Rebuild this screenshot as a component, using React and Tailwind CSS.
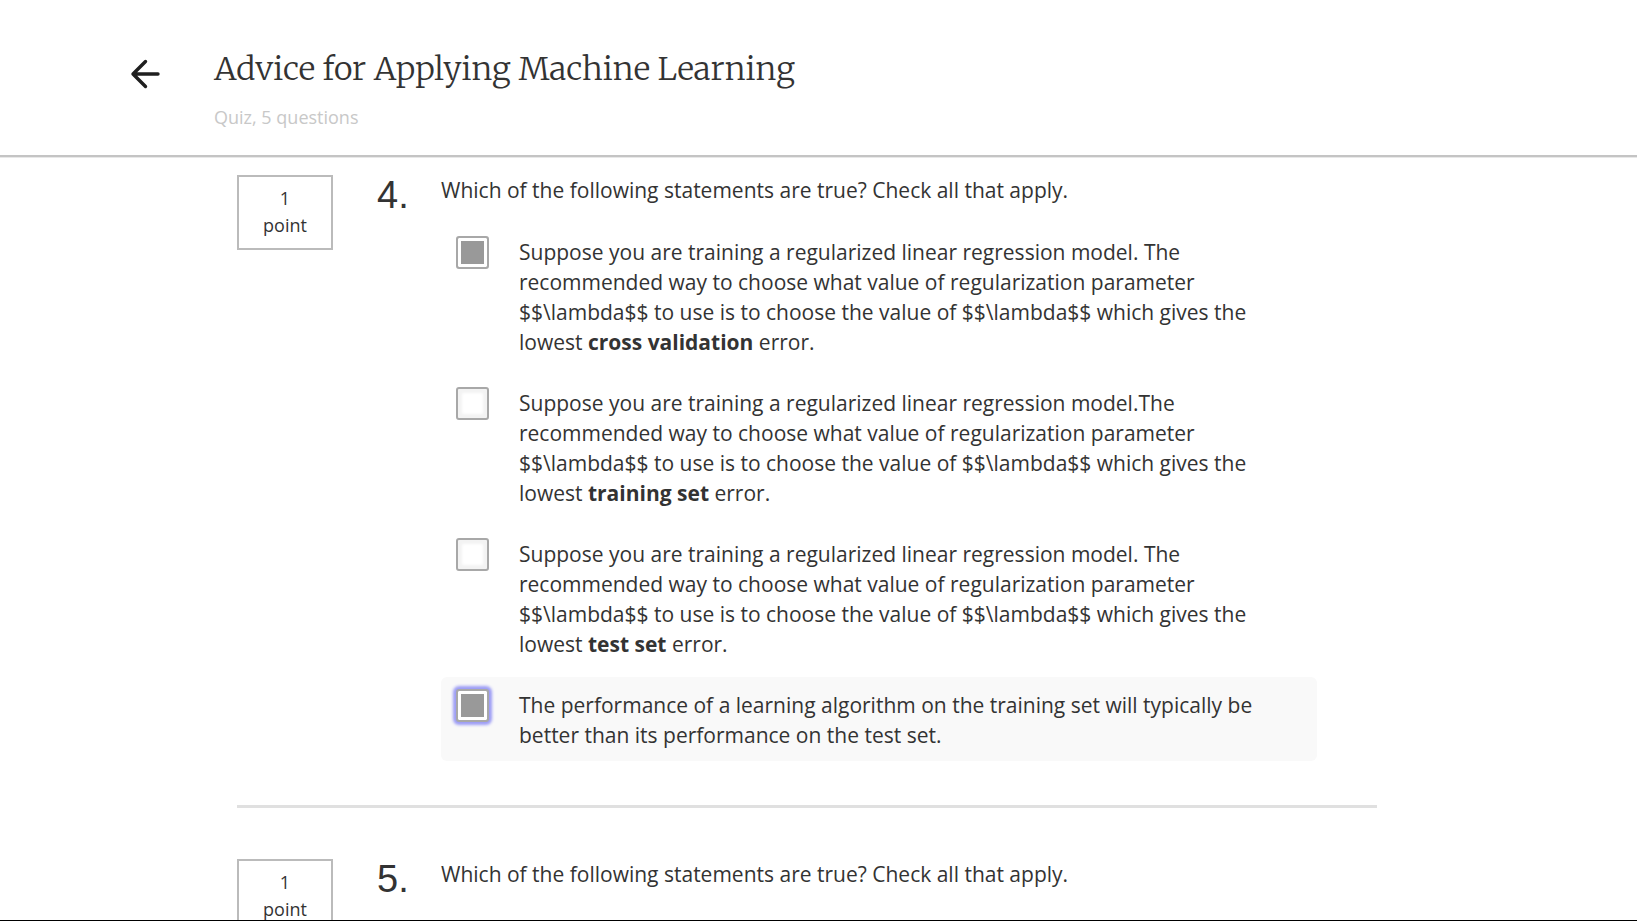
const lambdaOption = (lead, kind) => (
  <>
    {lead} recommended way to choose what value of regularization parameter
    $$\lambda$$ to use is to choose the value of $$\lambda$$ which gives the lowest{' '}
    <strong className="font-bold">{kind}</strong> error.
  </>
);

const questions = [
  {
    number: 4,
    options: [
      { id: 'q4-a', checked: true, text: lambdaOption('Suppose you are training a regularized linear regression model. The', 'cross validation') },
      { id: 'q4-b', checked: false, text: lambdaOption('Suppose you are training a regularized linear regression model.The', 'training set') },
      { id: 'q4-c', checked: false, text: lambdaOption('Suppose you are training a regularized linear regression model. The', 'test set') },
      {
        id: 'q4-d',
        checked: true,
        active: true,
        text: 'The performance of a learning algorithm on the training set will typically be better than its performance on the test set.',
      },
    ],
  },
  { number: 5, options: [{ id: 'q5-a', checked: false, text: '' }] },
];

function Option({ option }) {
  return (
    <div className={`flex gap-[30px] rounded-md pt-3 pr-12 pb-[11px] pl-[15px] ${option.active ? 'bg-[#f9f9f9]' : ''}`}>
      <input
        id={option.id}
        type="checkbox"
        defaultChecked={option.checked}
        aria-labelledby={`${option.id}-text`}
        className={`size-[33px] shrink-0 appearance-none rounded-[3px] border-2 border-[#a8a8a8] bg-white checked:bg-[#999999] ${
          option.active
            ? 'shadow-[inset_0_0_0_3px_#ffffff,0_0_3px_3px_#9c9cf5]'
            : 'shadow-[inset_0_0_3px_4px_#f3f3f3] checked:shadow-[inset_0_0_0_3px_#ffffff]'
        }`}
      />
      <label id={`${option.id}-text`} htmlFor={option.id} className="pt-px">
        {option.text}
      </label>
    </div>
  );
}

function Question({ question }) {
  return (
    <section className="flex items-start">
      <div className="w-24 shrink-0 border-2 border-[#bbbbbb] pt-2 pb-[9px] text-center text-lg leading-[27px]">
        1<br />
        point
      </div>
      <div className="w-[108px] shrink-0 pt-px pl-11 font-['Liberation_Sans',sans-serif] text-[38px] leading-[38px]">
        {question.number}.
      </div>
      <div className="max-w-[876px] grow">
        <p>Which of the following statements are true? Check all that apply.</p>
        <div className="mt-[19px] flex flex-col gap-[7px]">
          {question.options.map((option) => (
            <Option key={option.id} option={option} />
          ))}
        </div>
      </div>
    </section>
  );
}

export default function App() {
  return (
    <div className="flex h-screen flex-col overflow-hidden border-b border-black bg-white font-['Open_Sans',sans-serif] text-[21px] leading-[30px] text-[#333333]">
      <header className="relative shrink-0 border-b-2 border-[#c4c4c4] pt-[45px] pr-[23px] pb-[23px] shadow-[0_1px_0_#e8e8e8]">
        <div className="mx-auto flex max-w-[1354px] items-start">
          <button type="button" aria-label="Back" className="mt-[13px] w-[84px] shrink-0">
            <svg width="30" height="32" viewBox="0 0 30 32" fill="none" stroke="#1f1f1f" strokeWidth="3.4" strokeLinecap="round" strokeLinejoin="round">
              <path d="M28 16H3M15.5 3.5L3 16L15.5 28.5" />
            </svg>
          </button>
          <div>
            <h1 className="font-['Merriweather','Liberation_Serif',serif] text-[32px] leading-[48px] font-light">Advice for Applying Machine Learning</h1>
            <p className="mt-[9px] text-lg leading-[30px] text-[#c8c8c8]">Quiz, 5 questions</p>
          </div>
        </div>
      </header>
      <main className="min-h-0 grow overflow-hidden pt-[18px] pr-[23px]">
        <div className="mx-auto max-w-[1140px]">
          <Question question={questions[0]} />
          <hr className="mt-11 mb-[51px] border-t-[3px] border-[#e0e0e0]" />
          <Question question={questions[1]} />
        </div>
      </main>
    </div>
  );
}
